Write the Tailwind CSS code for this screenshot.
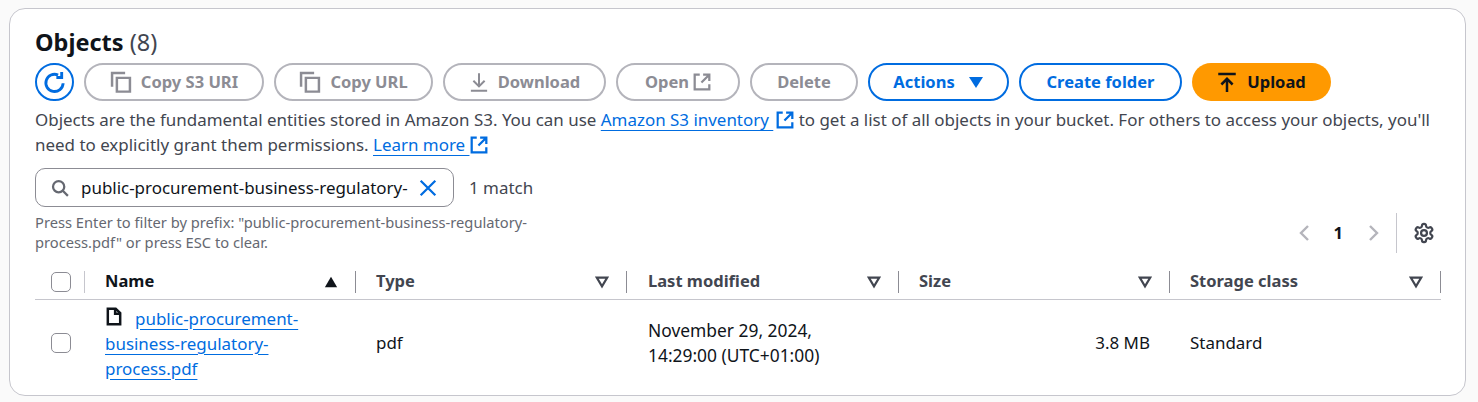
<!DOCTYPE html>
<html lang="en">
<head>
    <meta charset="UTF-8">
    <title>Objects</title>
    <script src="https://cdn.jsdelivr.net/npm/@tailwindcss/browser@4"></script>
</head>
<body class="bg-[#fafafa] font-['Noto_Sans',sans-serif] text-[16.950px] text-[#16191f] overflow-hidden">
    <div class="ml-[9px] mt-[8px] w-[1457px] h-[388px] bg-white border border-[#c6c6cd] rounded-[16px] pl-[25px] pr-[25px] pt-[17px]">
        <h2 class="h-[37px] text-[23.5px] leading-[32px] font-bold text-[#0f141a]">Objects <span class="font-normal text-[#424650]">(8)</span></h2>

        <div class="flex gap-[10px] h-[38px] text-[16.500px]">
            <button class="w-[39px] h-[38px] rounded-full border-2 border-[#006ce0] flex items-center justify-center text-[#006ce0]">
                <svg class="w-[23px] h-[23px]" viewBox="0 0 16 16" fill="none" stroke="currentColor" stroke-width="2"><path d="M14 8.500A6 6 0 1 1 10.500 2.800"/><path d="M13 .7v3.800H9.300"/></svg>
            </button>
            <button class="w-[180px] rounded-full border-2 border-[#b4b4bb] flex items-center justify-center gap-[9px] font-bold text-[#8c8c94]">
                <svg class="w-[22px] h-[22px]" viewBox="0 0 16 16" fill="none" stroke="currentColor" stroke-width="1.800"><path d="M5 5h9.500v10H5z"/><path d="M1.500 11.500V1.500h9.500"/></svg>Copy S3 URI
            </button>
            <button class="w-[159px] rounded-full border-2 border-[#b4b4bb] flex items-center justify-center gap-[9px] font-bold text-[#8c8c94]">
                <svg class="w-[22px] h-[22px]" viewBox="0 0 16 16" fill="none" stroke="currentColor" stroke-width="1.800"><path d="M5 5h9.500v10H5z"/><path d="M1.500 11.500V1.500h9.500"/></svg>Copy URL
            </button>
            <button class="w-[163px] rounded-full border-2 border-[#b4b4bb] flex items-center justify-center gap-[9px] font-bold text-[#8c8c94]">
                <svg class="w-[20px] h-[20px]" viewBox="0 0 16 16" fill="none" stroke="currentColor" stroke-width="1.600"><path d="M1.500 15h13M8 1v10M3.500 7 8 11.500 12.500 7"/></svg>Download
            </button>
            <button class="w-[124px] rounded-full border-2 border-[#b4b4bb] flex items-center justify-center gap-[4px] font-bold text-[#8c8c94]">
                Open<svg class="w-[18px] h-[18px]" viewBox="0 0 16 16" fill="none" stroke="currentColor" stroke-width="2"><path d="M6 1.500H1.500v13h13V10"/><path d="M9 1.500h5.500V7M14 2 7.500 8.500"/></svg>
            </button>
            <button class="w-[108px] rounded-full border-2 border-[#b4b4bb] font-bold text-[#8c8c94]">Delete</button>
            <button class="w-[141px] rounded-full border-2 border-[#006ce0] flex items-center justify-center gap-[13px] font-bold text-[#006ce0]">
                Actions<svg class="w-[16px] h-[16px]" viewBox="0 0 16 16" fill="currentColor"><path d="M1 3h14L8 14z"/></svg>
            </button>
            <button class="w-[163px] rounded-full border-2 border-[#006ce0] font-bold text-[#006ce0]">Create folder</button>
            <button class="w-[139px] rounded-full bg-[#ff9900] flex items-center justify-center gap-[10px] font-bold text-[#0f141a]">
                <svg class="w-[20px] h-[20px]" viewBox="0 0 16 16" fill="none" stroke="currentColor" stroke-width="2"><path d="M1 1.500h14M8 16V5.500M3.500 10 8 5.500l4.500 4.500"/></svg>Upload
            </button>
        </div>

        <p class="mt-[6px] w-[1410px] text-[#424650] leading-[25px]">Objects are the fundamental entities stored in Amazon S3. You can use <a class="text-[#006ce0] underline underline-offset-4">Amazon S3 inventory <svg class="inline w-[18px] h-[18px] ml-[3px] align-[-3px]" viewBox="0 0 16 16" fill="none" stroke="currentColor" stroke-width="2"><path d="M6 1.500H1.500v13h13V10"/><path d="M9 1.500h5.500V7M14 2 7.500 8.500"/></svg></a> to get a list of all objects in your bucket. For others to access your objects, you'll need to explicitly grant them permissions. <a class="text-[#006ce0] underline underline-offset-4">Learn more <svg class="inline w-[18px] h-[18px] align-[-3px]" viewBox="0 0 16 16" fill="none" stroke="currentColor" stroke-width="2"><path d="M6 1.500H1.500v13h13V10"/><path d="M9 1.500h5.500V7M14 2 7.500 8.500"/></svg></a></p>

        <div class="mt-[11px] flex items-center h-[39px]">
            <div class="w-[419px] h-[39px] border border-[#8c8c94] rounded-[10px] flex items-center pl-[15px]">
                <svg class="w-[18px] h-[18px] text-[#656871] shrink-0" viewBox="0 0 16 16" fill="none" stroke="currentColor" stroke-width="2"><circle cx="6.800" cy="6.800" r="5"/><path d="m10.500 10.500 4.500 4.500"/></svg>
                <span class="ml-[12px] whitespace-nowrap text-[#0f141a]">public-procurement-business-regulatory-</span>
                <svg class="ml-[11px] w-[18px] h-[18px] text-[#006ce0] shrink-0" viewBox="0 0 16 16" fill="none" stroke="currentColor" stroke-width="2"><path d="m1.500 1.500 13 13M14.500 1.500l-13 13"/></svg>
            </div>
            <span class="ml-[15px] text-[#424650]">1 match</span>
        </div>

        <div class="flex justify-between items-start">
            <p class="mt-[6px] w-[520px] text-[14.700px] leading-[19.500px] text-[#656871]">Press Enter to filter by prefix: "public-procurement-business-regulatory-process.pdf" or press ESC to clear.</p>
            <div class="flex items-center h-[40px] mt-[6px] mr-[5px]">
                <svg class="w-[16px] h-[18px] text-[#b4b4bb]" viewBox="0 0 16 16" fill="none" stroke="currentColor" stroke-width="2.400"><path d="M11 1 4 8l7 7"/></svg>
                <span class="ml-[21px] mr-[22px] text-[16.500px] font-bold text-[#0f141a]">1</span>
                <svg class="w-[16px] h-[18px] text-[#b4b4bb]" viewBox="0 0 16 16" fill="none" stroke="currentColor" stroke-width="2.400"><path d="m5 1 7 7-7 7"/></svg>
                <div class="ml-[15px] h-[40px] border-l border-[#c6c6cd] pl-[16px] flex items-center">
                    <svg class="w-[22px] h-[22px] text-[#424650]" viewBox="0 0 24 24" fill="none" stroke="currentColor" stroke-width="2.400" stroke-linejoin="round"><circle cx="12" cy="12" r="3.200"/><path d="M12.220 2h-.44a2 2 0 0 0-2 2v.18a2 2 0 0 1-1 1.730l-.43.25a2 2 0 0 1-2 0l-.15-.08a2 2 0 0 0-2.730.73l-.22.38a2 2 0 0 0 .73 2.730l.15.1a2 2 0 0 1 1 1.720v.51a2 2 0 0 1-1 1.740l-.15.09a2 2 0 0 0-.73 2.730l.22.38a2 2 0 0 0 2.730.73l.15-.08a2 2 0 0 1 2 0l.43.25a2 2 0 0 1 1 1.730V20a2 2 0 0 0 2 2h.44a2 2 0 0 0 2-2v-.18a2 2 0 0 1 1-1.730l.43-.25a2 2 0 0 1 2 0l.15.08a2 2 0 0 0 2.730-.73l.22-.39a2 2 0 0 0-.73-2.730l-.15-.08a2 2 0 0 1-1-1.740v-.5a2 2 0 0 1 1-1.740l.15-.09a2 2 0 0 0 .73-2.730l-.22-.38a2 2 0 0 0-2.730-.73l-.15.08a2 2 0 0 1-2 0l-.43-.25a2 2 0 0 1-1-1.730V4a2 2 0 0 0-2-2z"/></svg>
                </div>
            </div>
        </div>

        <div class="mt-[11px] w-[1406px] grid grid-cols-[50px_271px_271px_272px_271px_271px] h-[36px] border-b border-[#c6c6cd] font-bold text-[16.500px] text-[#424650] items-center">
            <div class="h-[22px] flex items-center justify-between pl-[16px]">
                <span class="w-[20px] h-[20px] rounded-[5px] border-[1.5px] border-[#8c8c94]"></span>
                <span class="h-[22px] border-r border-[#c6c6cd]"></span>
            </div>
            <div class="h-[22px] flex items-center justify-between pl-[20px] border-r border-[#8c8c94] text-[#0f141a]">Name<svg class="w-[14px] h-[14px] mr-[17px]" viewBox="0 0 16 16" fill="currentColor"><path d="M8 2 15 14H1z"/></svg></div>
            <div class="h-[22px] flex items-center justify-between pl-[20px] border-r border-[#8c8c94]">Type<svg class="w-[14px] h-[14px] mr-[17px]" viewBox="0 0 16 16" fill="none" stroke="currentColor" stroke-width="2.500"><path d="M2 3h12L8 13z"/></svg></div>
            <div class="h-[22px] flex items-center justify-between pl-[21px] border-r border-[#8c8c94]">Last modified<svg class="w-[14px] h-[14px] mr-[17px]" viewBox="0 0 16 16" fill="none" stroke="currentColor" stroke-width="2.500"><path d="M2 3h12L8 13z"/></svg></div>
            <div class="h-[22px] flex items-center justify-between pl-[20px] border-r border-[#8c8c94]">Size<svg class="w-[14px] h-[14px] mr-[17px]" viewBox="0 0 16 16" fill="none" stroke="currentColor" stroke-width="2.500"><path d="M2 3h12L8 13z"/></svg></div>
            <div class="h-[22px] flex items-center justify-between pl-[20px] border-r border-[#8c8c94]">Storage class<svg class="w-[14px] h-[14px] mr-[17px]" viewBox="0 0 16 16" fill="none" stroke="currentColor" stroke-width="2.500"><path d="M2 3h12L8 13z"/></svg></div>
        </div>

        <div class="w-[1406px] grid grid-cols-[50px_271px_271px_272px_271px_271px] items-center h-[86px] text-[#0f141a]">
            <div class="pl-[16px]"><span class="block w-[20px] h-[20px] rounded-[5px] border-[1.5px] border-[#8c8c94]"></span></div>
            <div class="pl-[20px] pr-[40px] leading-[25px]">
                <svg class="inline w-[18px] h-[19px] mr-[12px] align-[-1px] text-[#0f141a]" viewBox="0 0 16 16" fill="none" stroke="currentColor" stroke-width="2.200"><path d="M2.500 1.200h7L13.500 5v9.800h-11z"/><path d="M9 1.200v4.300h4.500"/></svg><a class="text-[#006ce0] underline underline-offset-4">public-procurement-business-regulatory-process.pdf</a>
            </div>
            <div class="pl-[20px]">pdf</div>
            <div class="pl-[21px] leading-[25px] text-[17.400px]">November 29, 2024,<br>14:29:00 (UTC+01:00)</div>
            <div class="pr-[20px] text-right">3.8 MB</div>
            <div class="pl-[20px]">Standard</div>
        </div>
    </div>
</body>
</html>
